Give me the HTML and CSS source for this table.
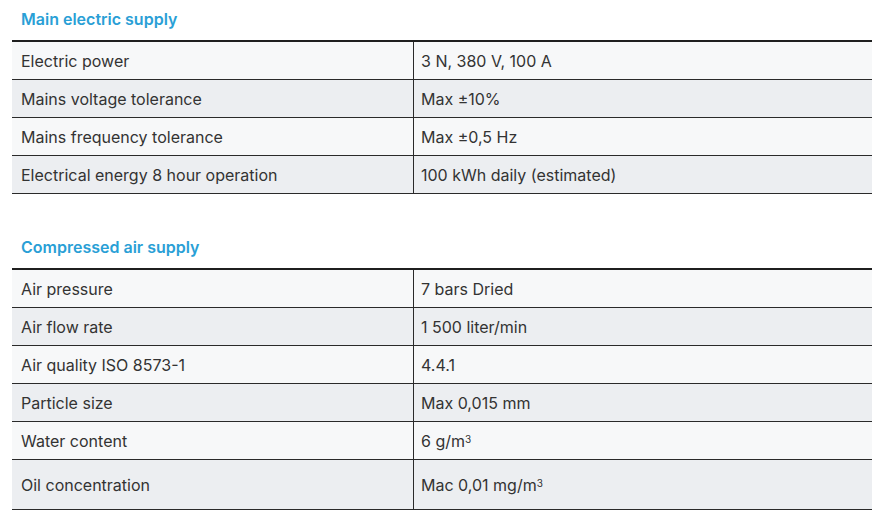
FILE: index.html
```html
<!DOCTYPE html>
<html lang="en">
<head>
<meta charset="utf-8">
<title>Supply specifications</title>
<link rel="stylesheet" href="styles.css">
</head>
<body>
<div class="page">
  <section class="spec">
    <h2 class="spec-title">Main electric supply</h2>
    <div class="spec-table">
      <div class="row"><div class="cell key">Electric power</div><div class="cell val">3 N, 380 V, 100 A</div></div>
      <div class="row alt"><div class="cell key">Mains voltage tolerance</div><div class="cell val">Max ±10%</div></div>
      <div class="row"><div class="cell key">Mains frequency tolerance</div><div class="cell val">Max ±0,5 Hz</div></div>
      <div class="row alt"><div class="cell key">Electrical energy 8 hour operation</div><div class="cell val">100 kWh daily (estimated)</div></div>
    </div>
  </section>
  <section class="spec spec-second">
    <h2 class="spec-title">Compressed air supply</h2>
    <div class="spec-table">
      <div class="row"><div class="cell key">Air pressure</div><div class="cell val">7 bars Dried</div></div>
      <div class="row alt"><div class="cell key">Air flow rate</div><div class="cell val">1 500 liter/min</div></div>
      <div class="row"><div class="cell key">Air quality ISO 8573-1</div><div class="cell val">4.4.1</div></div>
      <div class="row alt"><div class="cell key">Particle size</div><div class="cell val">Max 0,015 mm</div></div>
      <div class="row"><div class="cell key">Water content</div><div class="cell val">6 g/m<sup class="sup">3</sup></div></div>
      <div class="row alt tall"><div class="cell key">Oil concentration</div><div class="cell val">Mac 0,01 mg/m<sup class="sup">3</sup></div></div>
    </div>
  </section>
</div>
</body>
</html>
```
FILE: styles.css
```css
html, body {
  margin: 0;
  padding: 0;
  background: #ffffff;
}

.page {
  width: 860px;
  padding-left: 12px;
  font-family: Inter, Roboto, "Liberation Sans", Arial, sans-serif;
  color: #333333;
}

.spec-title {
  margin: 0;
  height: 40px;
  box-sizing: border-box;
  padding: 7px 0 0 9px;
  font-size: 16px;
  line-height: 24px;
  font-weight: 600;
  color: #2a9fd6;
}

.spec-second {
  margin-top: 34px;
}

.spec-table {
  border-top: 2px solid #1f1f1f;
}

.row {
  display: grid;
  grid-template-columns: 401px 1fr;
  height: 38px;
  box-sizing: border-box;
  border-bottom: 1px solid #2a2a2a;
  background: #f7f8f9;
}

.row.alt {
  background: #eceef1;
}

.row.tall {
  height: 50px;
}

.cell {
  display: flex;
  align-items: center;
  font-size: 16px;
  line-height: 20px;
  padding-top: 1px;
  font-weight: 400;
}

.key {
  padding-left: 9px;
}

.val {
  border-left: 1px solid #2a2a2a;
  padding-left: 7px;
}

.sup {
  font-size: 10px;
  line-height: 0;
  position: relative;
  top: -2px;
  vertical-align: super;
}
```
